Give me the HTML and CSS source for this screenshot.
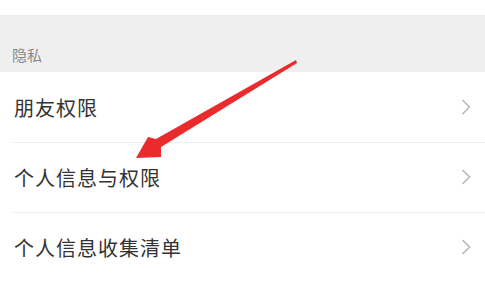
FILE: index.html
```html
<!DOCTYPE html>
<html lang="zh-CN">
<head>
<meta charset="utf-8">
<link rel="stylesheet" href="styles.css">
</head>
<body>
<div class="page">
  <div class="top"></div>
  <div class="section-head"><span class="section-title">隐私</span></div>
  <ul class="list">
    <li class="row"><span class="label">朋友权限</span><svg class="chev" viewBox="0 0 10 16" width="10" height="16"><path d="M1.5 1 L8.5 8 L1.5 15" fill="none" stroke="#b9b9b9" stroke-width="1.6"/></svg></li>
    <li class="row"><span class="label">个人信息与权限</span><svg class="chev" viewBox="0 0 10 16" width="10" height="16"><path d="M1.5 1 L8.5 8 L1.5 15" fill="none" stroke="#b9b9b9" stroke-width="1.6"/></svg></li>
    <li class="row"><span class="label">个人信息收集清单</span><svg class="chev" viewBox="0 0 10 16" width="10" height="16"><path d="M1.5 1 L8.5 8 L1.5 15" fill="none" stroke="#b9b9b9" stroke-width="1.6"/></svg></li>
  </ul>
  <svg class="arrow" viewBox="0 0 485 281" width="485" height="281">
    <polygon points="296,60 156,139 148,137 136,158 161,157 161,147 297,63" fill="#ea2a2c"/>
  </svg>
</div>
</body>
</html>
```
FILE: styles.css
```css
html, body {
  margin: 0;
  padding: 0;
  background: #ffffff;
}
.page {
  position: relative;
  width: 485px;
  height: 281px;
  overflow: hidden;
  font-family: "Noto Sans CJK SC", "Noto Sans", sans-serif;
}
.top {
  height: 15px;
  border-bottom: 1px solid #ececec;
  background: #ffffff;
}
.section-head {
  height: 56px;
  background: #efefef;
  display: flex;
  align-items: flex-end;
  padding-left: 12px;
  box-sizing: border-box;
  padding-bottom: 10px;
}
.section-title {
  font-size: 15px;
  line-height: 15px;
  color: #8a8a8a;
}
.list {
  list-style: none;
  margin: 0;
  padding: 0;
  background: #ffffff;
}
.row {
  position: relative;
  height: 70px;
  display: flex;
  align-items: center;
  justify-content: space-between;
  padding: 0 14px 0 14px;
  box-sizing: border-box;
}
.row + .row::before {
  content: "";
  position: absolute;
  left: 13px;
  right: 0;
  top: 0;
  height: 1px;
  background: #ececec;
}
.label {
  font-size: 20px;
  color: #333333;
  letter-spacing: 1px;
}
.chev {
  display: block;
  margin-right: 0;
}
.arrow {
  position: absolute;
  left: 0;
  top: 0;
  pointer-events: none;
}
```
